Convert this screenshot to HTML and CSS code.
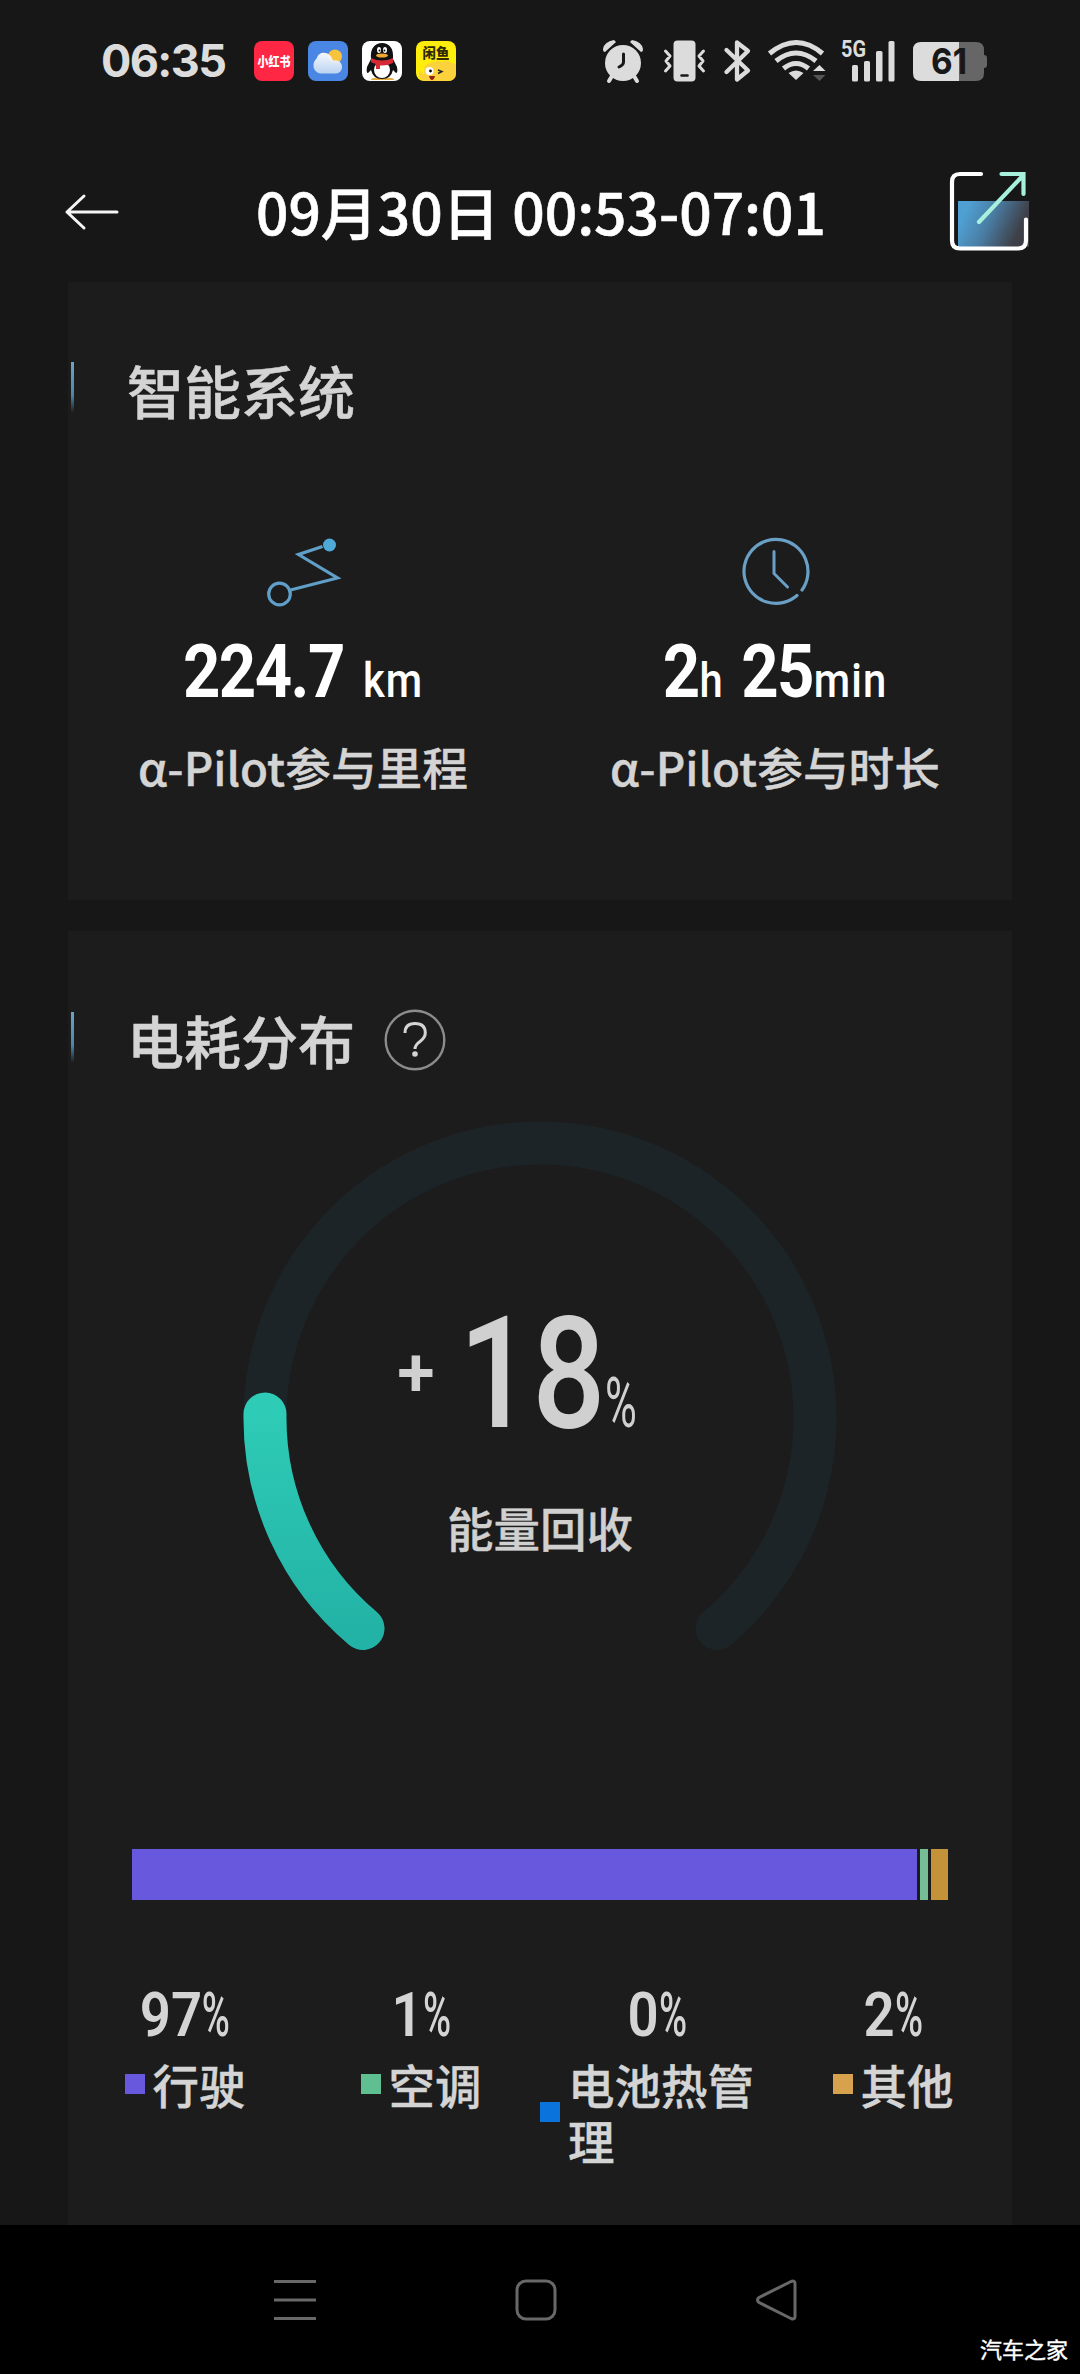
FILE: index.html
```html
<!DOCTYPE html>
<html lang="zh-CN">
<head>
<meta charset="utf-8">
<title>行程详情</title>
<link rel="stylesheet" href="styles.css">
</head>
<body>
<div class="screen">
  <header class="status">
    <span class="clock">06:35</span>
    <div class="apps">
      <svg class="app" viewBox="0 0 40 40"><rect width="40" height="40" rx="8" fill="#ff2744"/><text x="20" y="25" class="app-red" textLength="33" lengthAdjust="spacingAndGlyphs">小红书</text></svg>
      <svg class="app" viewBox="0 0 40 40"><defs><linearGradient id="cloud" x1="0" y1="0" x2="0" y2="1"><stop offset="0" stop-color="#fff"/><stop offset="1" stop-color="#c3d8f2"/></linearGradient></defs><rect width="40" height="40" rx="8" fill="#4a87e4"/><circle cx="27" cy="15.500" r="7" fill="#f7c23c"/><path d="M13 32.500a8 8 0 0 1-7.500-9c.3-3 2-5 3.500-6.500 1-5 8-7 12.500-3 2 1.800 3 3.500 3.500 5.500 5-1 9 2 9 6.500 0 3.500-2.500 6.500-6 6.500z" fill="url(#cloud)" opacity=".94"/></svg>
      <svg class="app" viewBox="0 0 40 40"><rect width="40" height="40" rx="8" fill="#fff"/><path d="M12 37h8v2H9q0-2 3-2zM20 37h9q3 0 3 2H20z" fill="#e5ad3f"/><path d="M9 18C8 7 13 2 20 2s12 5 11 16l4 8q1 6-1 6l-3-3q-2 9-11 9T9 29l-3 3q-2 0-1-6z" fill="#111"/><ellipse cx="20" cy="29" rx="8" ry="8" fill="#fff"/><ellipse cx="17" cy="9" rx="2" ry="3" fill="#fff"/><ellipse cx="23" cy="9" rx="2" ry="3" fill="#fff"/><circle cx="17.500" cy="9.500" r=".9"/><circle cx="22.500" cy="9.500" r=".9"/><ellipse cx="20" cy="14.500" rx="6" ry="2" fill="#efa92e"/><path d="M9 17q11 5 22 0v5q-6 3-13 2.500V28h-4v-5q-4-1-5-2z" fill="#d52a36"/></svg>
      <svg class="app" viewBox="0 0 40 40"><rect width="40" height="40" rx="8" fill="#ffee0b"/><path d="M3 29l5 5q-1-11 6-12 8-3 12-1 6-3 9 1l5 1v9q0 8-8 8H8l-5-4z" fill="#fbd23c"/><circle cx="13.500" cy="30" r="4" fill="#fff"/><circle cx="14.500" cy="30" r="1.400"/><path d="M22 29l4 1.500-4 2" fill="none" stroke="#222" stroke-width="1.400"/><path d="M13 35h6q-1 4-3 4t-3-4z" fill="#902018"/><text x="20" y="17" class="app-yellow" textLength="27" lengthAdjust="spacingAndGlyphs">闲鱼</text></svg>
    </div>
    <div class="signals">
      <svg class="alarm" width="42" height="44" viewBox="602 38 42 44" fill="#dcdcdc"><circle cx="623" cy="62" r="18"/><path d="M603 48q1-7 11-9l2 2-11 10q-2 0-2-3zM643 48q-1-7-11-9l-2 2 11 10q2 0 2-3z"/><path d="M612 75l-3 5M634 75l3 5" stroke="#dcdcdc" stroke-width="4" stroke-linecap="round"/><path d="M623.500 53v8q0 3-4.500 5" fill="none" stroke="#181818" stroke-width="3" stroke-linecap="round"/></svg>
      <svg class="vibrate" width="42" height="44" viewBox="663 38 42 44" fill="none" stroke="#dcdcdc" stroke-width="3" stroke-linecap="round" stroke-linejoin="round"><rect x="673.500" y="39.500" width="22" height="41" rx="4" fill="#dcdcdc" stroke="none"/><path d="M665.500 50l4.500 5-4 5 4 5-4.500 5M703.500 50l-4.500 5 4 5-4 5 4.500 5"/><path d="M681.500 74.500h6" stroke="#181818" stroke-width="2.500"/></svg>
      <svg class="bluetooth" width="28" height="44" viewBox="723 38 28 44" fill="none" stroke="#dcdcdc" stroke-width="4.300" stroke-linejoin="round" stroke-linecap="round"><path d="M726.500 49l21.500 20.500-11 9V41.500l11 8.500-21.500 21"/></svg>
      <svg class="wifi" width="60" height="44" viewBox="767 38 60 44" fill="none" stroke="#dcdcdc" stroke-width="5"><path d="M769.500 52.500q27-22 53 0M776 60q20-16 40 0M783.500 67.500q12.500-10 25 0"/><path d="M788.500 72q7.500-5 15 0l-7.500 7z" fill="#dcdcdc" stroke="none"/><path d="M813 70l6.500-6 6 6z" fill="#dcdcdc" stroke="none"/><path d="M813 74h12.500l-6 6z" fill="#555" stroke="none"/></svg>
      <svg class="cell" width="55" height="44" viewBox="841 38 55 44" fill="#dcdcdc"><text x="841" y="56" class="net" textLength="25" lengthAdjust="spacingAndGlyphs">5G</text><rect x="852" y="64" width="6" height="16.500" rx="1.500"/><rect x="864" y="60" width="6" height="20.500" rx="1.500"/><rect x="876" y="50" width="6.500" height="30.500" rx="1.500"/><rect x="888.500" y="40" width="6" height="40.500" rx="1.500"/></svg>
      <svg width="75" height="44" viewBox="913 38 75 44"><path d="M959 41h17q8 0 8 8v5q3 0 3 3v7q0 3-3 3v5q0 8-8 8h-17z" fill="#666"/><path d="M921 41h38v39h-38q-8 0-8-8V49q0-8 8-8z" fill="#dcdcdc"/><text x="949" y="72.500" class="batt" textLength="36" lengthAdjust="spacingAndGlyphs">61</text></svg>
    </div>
  </header>

  <nav class="titlebar">
    <svg class="back" width="54" height="36" viewBox="0 0 54 36" fill="none" stroke="#f5f5f5" stroke-width="3" stroke-linecap="round" stroke-linejoin="round"><path d="M52 18H2M19 2L2 18l17 16"/></svg>
    <h1 class="title">09月30日 00:53-07:01</h1>
    <svg class="share" width="80" height="80" viewBox="948 171 80 80" fill="none"><defs><linearGradient id="sh" x1="0" y1=".6" x2="1" y2=".9"><stop offset="0" stop-color="#4f9fd2"/><stop offset=".35" stop-color="#4a7ea5"/><stop offset=".8" stop-color="#3e4048"/><stop offset="1" stop-color="#3c3c40"/></linearGradient></defs><rect x="958" y="201" width="71" height="46" fill="url(#sh)"/><path d="M981 174h-21q-8 0-8 8v58.500q0 8 8 8h58q8 0 8-8v-21" stroke="#fff" stroke-width="4.200" stroke-linecap="round"/><path d="M979 222l44-46.500M1001.500 174h22v20" stroke="#a6f0dc" stroke-width="4.200" stroke-linecap="round"/></svg>
  </nav>

  <main class="content">
    <section class="card system">
      <div class="heading"><i class="mark"></i><h2>智能系统</h2></div>
      <div class="stats">
        <div class="stat">
          <svg width="74" height="74" viewBox="267 535 74 74" fill="none" stroke="#5f9fc8" stroke-width="3.200"><circle cx="279.500" cy="594" r="10.800"/><path d="M290.500 590l47-12-39-23.500 24-8"/><circle cx="329.500" cy="545" r="6.500" fill="#4fa9d6" stroke="none"/></svg>
          <div class="value"><b>224.7</b><span class="unit gap">km</span></div>
          <div class="label">α-Pilot参与里程</div>
        </div>
        <div class="stat">
          <svg width="74" height="74" viewBox="739 535 74 74" fill="none" stroke="#6ba0c6" stroke-width="3.200" stroke-linecap="round"><path d="M802 590a32 32 0 1 0-5 5.500"/><path d="M774 551.500v22l13.500 13.500" stroke-width="3"/></svg>
          <div class="value"><b>2</b><span class="unit">h</span><b class="second">25</b><span class="unit">min</span></div>
          <div class="label">α-Pilot参与时长</div>
        </div>
      </div>
    </section>

    <section class="card energy">
      <div class="heading"><i class="mark"></i><h2>电耗分布</h2>
        <svg class="help" width="62" height="62" viewBox="0 0 62 62" fill="none" stroke="#8c8c8c" stroke-width="2.400"><circle cx="31" cy="31" r="29.300"/><path d="M21 24q0-9.500 10-9.500 10.300 0 10.300 9.500 0 4.500-5.300 8.500-5 3.500-5 7.500" stroke="#d4d4d4" stroke-width="3"/><circle cx="31" cy="45" r="2.800" fill="#d4d4d4" stroke="none"/></svg>
      </div>
      <div class="gauge">
        <svg width="620" height="540" viewBox="230 1110 620 540" fill="none" stroke-width="43" stroke-linecap="round"><defs><linearGradient id="gr" x1="0" y1="0" x2="0" y2="1"><stop offset="0" stop-color="#2ecbb6"/><stop offset="1" stop-color="#23b3a6"/></linearGradient></defs><path d="M363 1628.500A275 275 0 1 1 717 1628.500" stroke="#1c2427"/><path d="M363 1628.500A275 275 0 0 1 265 1414" stroke="url(#gr)"/></svg>
        <div class="reading">
          <div class="figure"><span class="plus">+</span><b>18</b><span class="pct">%</span></div>
          <div class="caption">能量回收</div>
        </div>
      </div>
      <div class="bar"><i class="drive"></i><i class="air"></i><i class="other"></i></div>
      <div class="legend">
        <div class="item"><div class="share-of"><b>97</b><span>%</span></div><div class="name"><i class="drive"></i><span>行驶</span></div></div>
        <div class="item"><div class="share-of"><b>1</b><span>%</span></div><div class="name"><i class="air"></i><span>空调</span></div></div>
        <div class="item"><div class="share-of"><b>0</b><span>%</span></div><div class="name"><i class="heat"></i><span>电池热管理</span></div></div>
        <div class="item"><div class="share-of"><b>2</b><span>%</span></div><div class="name"><i class="other-key"></i><span>其他</span></div></div>
      </div>
    </section>
  </main>

  <footer class="navbar">
    <svg width="42" height="42" viewBox="0 0 42 42" stroke="#686868" stroke-width="3"><path d="M0 2.500h42M0 21h42M0 39.500h42"/></svg>
    <svg width="42" height="42" viewBox="0 0 42 42" fill="none" stroke="#686868" stroke-width="3"><rect x="2" y="2" width="38" height="38" rx="9"/></svg>
    <svg width="42" height="42" viewBox="0 0 42 42" fill="none" stroke="#686868" stroke-width="3" stroke-linejoin="round"><path d="M3 18.500L35 2.500q4-1.500 4 2v33q0 3.500-4 2L3 23.500q-3-2.500 0-5z"/></svg>
    <span class="watermark">汽车之家</span>
  </footer>
</div>
</body>
</html>
```
FILE: styles.css
```css
* { box-sizing: border-box; }
body { margin: 0; background: #171717; }
h1, h2 { margin: 0; font-weight: 500; }
svg { display: block; flex: none; overflow: visible; }

.screen {
  width: 1080px;
  height: 2374px;
  display: flex;
  flex-direction: column;
  overflow: hidden;
  background: #171717;
  color: #d4d4d4;
  font-family: "Noto Sans CJK SC", sans-serif;
}

/* status bar */
.status { height: 122px; display: flex; align-items: center; padding: 0 92px 0 101px; }
.clock { width: 153px; font: 700 45px/60px Inter, sans-serif; letter-spacing: -1.600px; color: #dcdcdc; }
.apps { display: flex; gap: 14px; }
.app { width: 40px; height: 40px; }
.app-red { font: 900 13px "Noto Sans CJK SC", sans-serif; fill: #fff; text-anchor: middle; }
.app-yellow { font: 900 14px "Noto Sans CJK SC", sans-serif; fill: #332b00; text-anchor: middle; }
.signals { margin-left: auto; display: flex; align-items: center; }
.alarm { margin-right: 19px; }
.vibrate { margin-right: 18px; }
.bluetooth { margin-right: 16px; }
.wifi { margin-right: 14px; }
.cell { margin-right: 17px; }
.net { font: 700 24px Roboto, sans-serif; }
.batt { font: 700 36px Inter, sans-serif; fill: #181818; text-anchor: middle; }

/* title bar */
.titlebar { height: 160px; display: flex; align-items: center; padding: 0 52px 0 65px; }
.back { margin-top: 20px; }
.title { margin: 16px auto 0 137px; font-size: 56.900px; line-height: 80px; color: #fff; white-space: nowrap; -webkit-text-stroke: .6px #fff; }
.share { margin-top: 18px; }

/* cards */
.content { flex: 1; padding: 0 68px; display: flex; flex-direction: column; gap: 31px; }
.card { background: #1c1c1c; }
.system { height: 618px; padding-top: 80px; }
.energy { flex: 1; padding-top: 81px; }
.heading { display: flex; height: 60px; padding-left: 3px; }
.mark { width: 3px; height: 51px; background: linear-gradient(#6aa5c8, #4b86ac 65%, #1c1c1c); }
.heading h2 { margin: -3px 0 0 53px; font-size: 57px; line-height: 60px; -webkit-text-stroke: .5px #d4d4d4; }
.help { margin: -3px 0 0 29px; }

.stats { display: grid; grid-template-columns: 1fr 1fr; padding-top: 113px; }
.stat { display: flex; flex-direction: column; align-items: center; }
.value { display: flex; align-items: baseline; margin-top: 22px; height: 80px; line-height: 80px; color: #fff; font-family: Roboto, sans-serif; transform: translateX(-1px) scaleX(.87); }
.value b { font-size: 75px; font-weight: 700; letter-spacing: -1.800px; }
.unit { font-size: 48px; font-weight: 500; letter-spacing: 1.200px; margin-left: 1px; }
.unit.gap { margin-left: 22px; }
.second { margin-left: 20px; }
.label { margin-top: 25px; font-size: 45.700px; font-weight: 500; line-height: 60px; white-space: nowrap; transform: translateX(-1px); -webkit-text-stroke: .4px #d4d4d4; }

/* gauge */
.gauge { display: grid; justify-items: center; margin-top: 38px; }
.gauge > * { grid-area: 1 / 1; }
.reading { display: flex; flex-direction: column; align-items: center; padding-top: 184px; color: #d0d0d0; }
.figure { display: flex; align-items: baseline; height: 160px; line-height: 160px; margin-right: 46px; font-family: Roboto, sans-serif; }
.plus { font-size: 68px; font-weight: 600; transform: translateY(-31px); }
.figure b { width: 146px; margin-left: 24px; font-size: 156px; font-weight: 500; transform: scaleX(.825); transform-origin: left; }
.pct { width: 32px; margin-left: 0; font-size: 70px; transform: scaleX(.62); transform-origin: left; }
.caption { margin-top: 43px; font-size: 46.500px; font-weight: 500; line-height: 60px; -webkit-text-stroke: .4px #d0d0d0; }

/* distribution bar */
.bar { display: flex; gap: 3px; margin: 199px 64px 0; height: 51px; width: 816px; }
.drive { background: #6858de; }
.air { background: #5fbf90; }
.heat { background: #0b74dc; }
.other { background: #c39239; }
.other-key { background: #d7a24d; }
.bar .drive { flex: 1; }
.bar .air { width: 8px; background: #76bd95; }
.bar .other { width: 17px; }

.legend { display: grid; grid-template-columns: repeat(4, 236px); padding-top: 80px; }
.share-of { display: flex; justify-content: center; align-items: baseline; height: 70px; line-height: 70px; font-family: Roboto, sans-serif; transform: scaleX(.88); }
.share-of b { font-size: 62px; font-weight: 600; }
.share-of span { width: 34px; font-size: 62px; font-weight: 500; transform: scaleX(.7); transform-origin: left; }
.name { display: flex; align-items: center; justify-content: center; gap: 8px; margin: 6px 2px 0 0; font-size: 46.500px; font-weight: 500; line-height: 56px; -webkit-text-stroke: .4px #d4d4d4; }
.item:nth-child(3) .name { margin-right: 0; }
.name i { flex: none; width: 20px; height: 20px; }

/* system navigation */
.navbar { position: relative; height: 149px; background: #000; display: flex; align-items: center; gap: 199px; padding-left: 274px; }
.watermark { position: absolute; right: 12px; bottom: 10px; font-size: 22px; line-height: 32px; color: #fff; -webkit-text-stroke: .4px #fff; }
```
